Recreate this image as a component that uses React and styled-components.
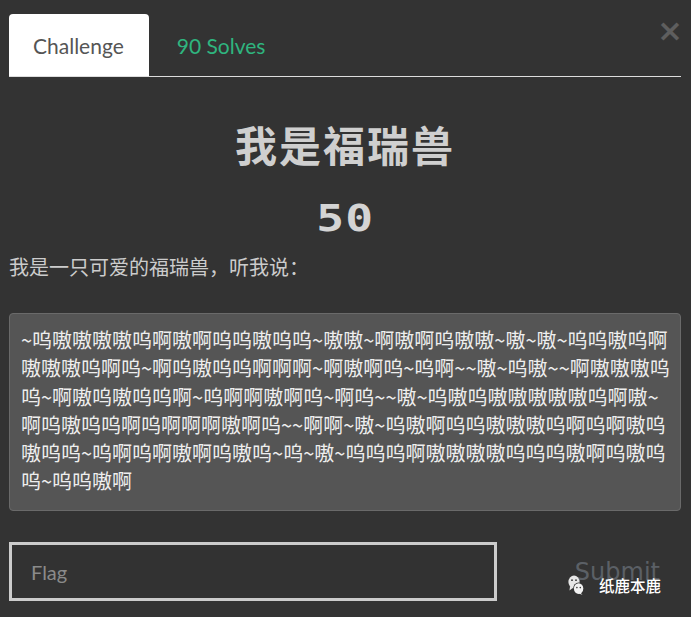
import React from 'react';
import styled, { createGlobalStyle } from 'styled-components';

const lines = [
  '~呜嗷嗷嗷嗷呜啊嗷啊呜呜嗷呜呜~嗷嗷~啊嗷啊呜嗷嗷~嗷~嗷~呜呜嗷呜啊',
  '嗷嗷嗷呜啊呜~啊呜嗷呜呜啊啊啊~啊嗷啊呜~呜啊~~嗷~呜嗷~~啊嗷嗷嗷呜',
  '呜~啊嗷呜嗷呜呜啊~呜啊啊嗷啊呜~啊呜~~嗷~呜嗷呜嗷嗷嗷嗷嗷呜啊嗷~',
  '啊呜嗷呜呜啊呜啊啊啊嗷啊呜~~啊啊~嗷~呜嗷啊呜呜嗷嗷嗷呜啊呜啊嗷呜',
  '嗷呜呜~呜啊呜啊嗷啊呜嗷呜~呜~嗷~呜呜呜啊嗷嗷嗷嗷呜呜呜嗷啊呜嗷呜',
  '呜~呜呜嗷啊',
];

const GlobalStyle = createGlobalStyle`
  html, body {
    margin: 0;
    background: #333333;
  }
  body {
    font-family: Lato, "Noto Sans CJK SC", sans-serif;
  }
`;

const Modal = styled.div`
  position: relative;
  width: 691px;
  height: 617px;
  box-sizing: border-box;
  padding: 14px 10px 0 9px;
  background: #333333;
  overflow: hidden;
`;

const TabBar = styled.div`
  display: flex;
  align-items: stretch;
  height: 62px;
  border-bottom: 1px solid #dddddd;
`;

const Tab = styled.div`
  display: flex;
  align-items: center;
  font-family: Lato, sans-serif;
  font-size: 21px;
  border-radius: 4px 4px 0 0;
  color: ${({ $active }) => ($active ? '#555555' : '#2fb57f')};
  background: ${({ $active }) => ($active ? '#ffffff' : 'transparent')};
  padding: ${({ $active }) => ($active ? '0 25px 0 24px' : '0 0 0 28px')};
`;

const Close = styled.div`
  position: absolute;
  top: 15px;
  right: 8px;
  font-family: "DejaVu Sans", sans-serif;
  font-weight: bold;
  font-size: 31px;
  line-height: 1;
  color: #5e5e5e;
`;

const Title = styled.h2`
  margin: 41px 0 0;
  text-align: center;
  font-family: "Noto Sans CJK SC", sans-serif;
  font-weight: 700;
  font-size: 42px;
  letter-spacing: 2px;
  line-height: 52px;
  color: #cfcfcf;
`;

const Points = styled.div`
  display: flex;
  justify-content: center;
  align-items: center;
  height: 40px;
  margin-top: 29px;
`;

const PointsValue = styled.span`
  display: block;
  transform: scaleX(1.25);
  font-family: "DejaVu Sans Mono", monospace;
  font-weight: bold;
  font-size: 37px;
  line-height: 40px;
  letter-spacing: 1px;
  color: #d4d4d4;
`;

const Intro = styled.p`
  margin: 14px 0 0;
  font-family: "Noto Sans CJK SC", sans-serif;
  font-size: 20px;
  line-height: 28px;
  color: #cccccc;
`;

const Cipher = styled.div`
  margin-top: 32px;
  box-sizing: border-box;
  height: 198px;
  padding: 12px 10px 14px 11px;
  background: #555555;
  border: 1px solid #6a6a6a;
  border-radius: 4px;
  font-family: "Noto Sans CJK SC", sans-serif;
  font-size: 20px;
  line-height: 28.3px;
  color: #eeeeee;
  white-space: nowrap;
`;

const FlagRow = styled.div`
  display: flex;
  align-items: center;
  margin-top: 31px;
`;

const FlagInput = styled.input`
  box-sizing: border-box;
  width: 488px;
  height: 59px;
  padding: 0 19px;
  background: #323232;
  border: 3px solid #cccccc;
  outline: none;
  font-family: Lato, sans-serif;
  font-size: 20px;
  color: #eeeeee;

  &::placeholder {
    color: #8a8a8a;
  }
`;

const SubmitButton = styled.button`
  flex: 1;
  padding: 0 21px 0 0;
  background: none;
  border: none;
  text-align: right;
  font-family: "DejaVu Sans", sans-serif;
  font-size: 24px;
  color: #5b6066;
`;

const Watermark = styled.div`
  position: absolute;
  left: 568px;
  top: 574px;
  display: flex;
  align-items: center;
  gap: 15px;
  font-family: "Noto Sans CJK SC", sans-serif;
  font-size: 15.5px;
  font-weight: 500;
  color: #ffffff;
`;

const WeChat = () => (
  <svg width="16" height="20" viewBox="0 0 16 20">
    <ellipse cx="6" cy="7" rx="5.6" ry="6.4" fill="#e6e6e6" />
    <path d="M2 11.5 L1.5 15.5 L5 12.8 Z" fill="#e6e6e6" />
    <circle cx="4" cy="5.2" r="0.9" fill="#333" />
    <circle cx="8" cy="5.2" r="0.9" fill="#333" />
    <ellipse cx="10.6" cy="13.6" rx="5.4" ry="6" fill="#333" />
    <ellipse cx="10.6" cy="13.6" rx="4.7" ry="5.3" fill="#f2f2f2" />
    <path d="M12.5 17.8 L14.5 19.8 L10.5 18.6 Z" fill="#f2f2f2" />
    <circle cx="8.9" cy="12.6" r="0.8" fill="#333" />
    <circle cx="12.3" cy="12.6" r="0.8" fill="#333" />
  </svg>
);

const App = () => (
  <>
    <GlobalStyle />
    <Modal>
      <TabBar>
        <Tab $active>Challenge</Tab>
        <Tab>90 Solves</Tab>
      </TabBar>
      <Close>×</Close>
      <Title>我是福瑞兽</Title>
      <Points>
        <PointsValue>50</PointsValue>
      </Points>
      <Intro>我是一只可爱的福瑞兽，听我说：</Intro>
      <Cipher>
        {lines.map((line, i) => (
          <div key={i}>{line}</div>
        ))}
      </Cipher>
      <FlagRow>
        <FlagInput placeholder="Flag" />
        <SubmitButton>Submit</SubmitButton>
      </FlagRow>
      <Watermark>
        <WeChat />
        纸鹿本鹿
      </Watermark>
    </Modal>
  </>
);

export default App;
